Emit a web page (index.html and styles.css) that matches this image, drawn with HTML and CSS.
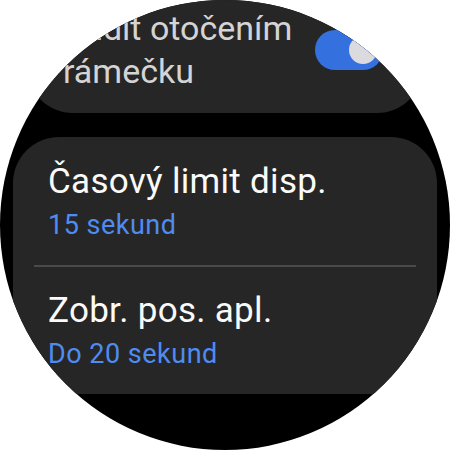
FILE: index.html
```html
<!DOCTYPE html>
<html lang="cs">
<head>
    <meta charset="UTF-8">
    <meta name="viewport" content="width=device-width, initial-scale=1.0">
    <title>Displej</title>
    <link rel="stylesheet" href="styles.css">
</head>
<body>
    <div class="screen">
        <div class="list">
            <div class="card card-toggle">
                <div class="toggle-label">Budit otočením<br>rámečku</div>
                <div class="switch on"><div class="thumb"></div></div>
            </div>
            <div class="card">
                <div class="row">
                    <div class="title">Časový limit disp.</div>
                    <div class="value">15 sekund</div>
                </div>
                <div class="divider"></div>
                <div class="row">
                    <div class="title">Zobr. pos. apl.</div>
                    <div class="value">Do 20 sekund</div>
                </div>
            </div>
        </div>
    </div>
</body>
</html>
```

FILE: styles.css
```css
body {
    margin: 0;
    background: #fff;
    font-family: Roboto, "Noto Sans", sans-serif;
}
.screen {
    width: 450px;
    height: 450px;
    border-radius: 50%;
    overflow: hidden;
    background: #000;
}
.list {
    display: flex;
    flex-direction: column;
    gap: 24px;
    margin-top: -20px;
}
.card {
    background: #262626;
    border-radius: 46px;
    margin: 0 13px;
    padding-top: 1px;
}
.card-toggle {
    margin: 0 27px;
    padding: 27px 40px 20px 36px;
    display: flex;
    align-items: center;
    justify-content: space-between;
}
.toggle-label {
    color: #d4d4d4;
    font-size: 34px;
    line-height: 43px;
}
.switch {
    width: 68px;
    height: 40px;
    border-radius: 20px;
    background: #3570df;
    display: flex;
    align-items: center;
    justify-content: flex-end;
    padding: 0 6px;
    box-sizing: border-box;
}
.thumb {
    width: 28px;
    height: 28px;
    border-radius: 50%;
    background: #dbdbdf;
}
.row {
    padding: 24px 20px 24px 35px;
}
.title {
    color: #fafafa;
    font-size: 35px;
    line-height: 40px;
    letter-spacing: 0.3px;
}
.value {
    color: #4f8cf2;
    font-size: 27px;
    line-height: 32px;
    margin-top: 7px;
    letter-spacing: 0.5px;
}
.divider {
    height: 2px;
    margin: 0 21px;
    background: #4a4a4a;
}
```
